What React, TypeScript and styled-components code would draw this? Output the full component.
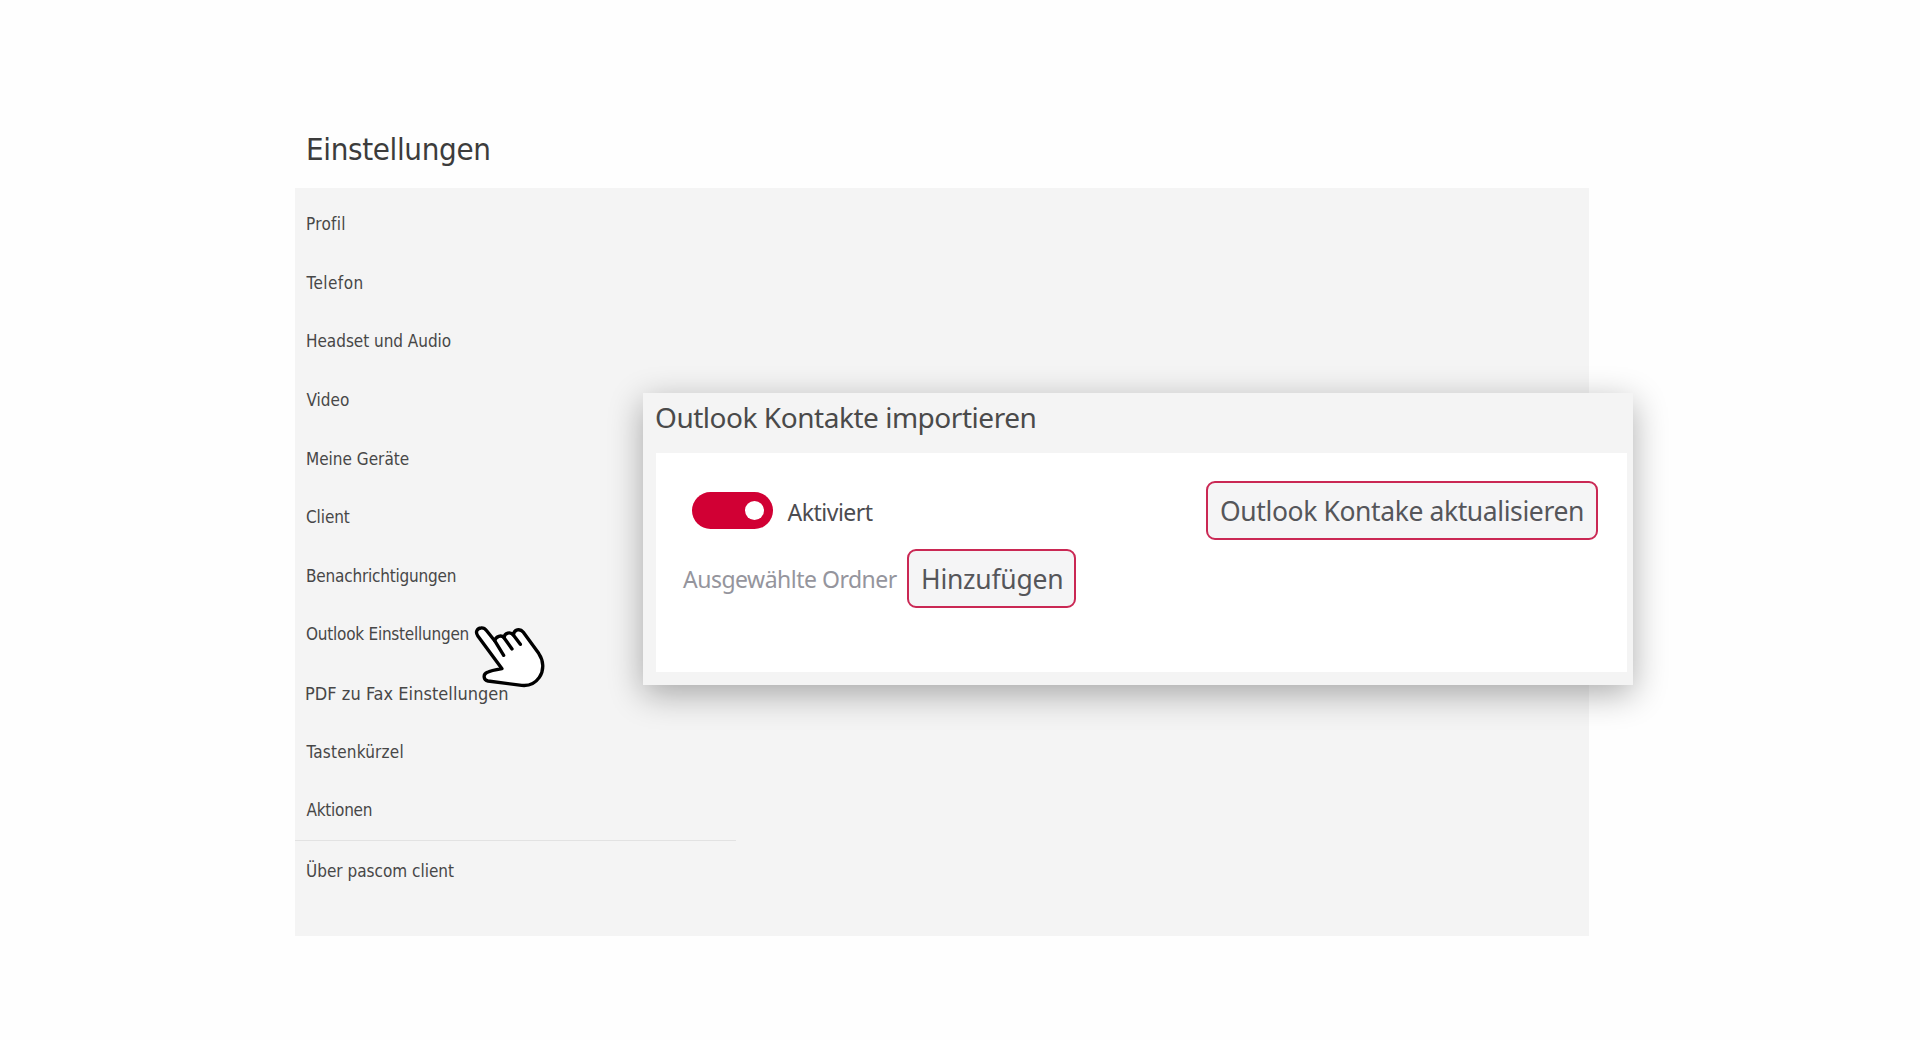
import React from 'react';
import styled, { createGlobalStyle } from 'styled-components';

const GlobalStyle = createGlobalStyle`
  * { box-sizing: border-box; }
  body { margin: 0; background: #fefefe; }
`;

const uiFont = '"DejaVu Sans Condensed", "DejaVu Sans", sans-serif';
const dialogFont = '"Noto Sans", "Open Sans", sans-serif';

const Page = styled.main`
  width: 1920px;
  height: 1040px;
  overflow: hidden;
  padding: 128px 331px 0 295px;
  background: #fefefe;
  color: #474747;
  font-family: ${uiFont};
`;

const PageTitle = styled.h1`
  margin: 0;
  height: 60px;
  padding-left: 11px;
  font-size: 31px;
  font-weight: 400;
  line-height: 42px;
  letter-spacing: -0.35px;
  color: #3c3c3c;
`;

const Panel = styled.section`
  position: relative;
  height: 748.4px;
  padding-top: 7px;
  background: #f4f4f4;
`;

const Menu = styled.nav`
  width: 441px;
  display: flex;
  flex-direction: column;
`;

const MenuItem = styled.a<{ $spacing?: number; $size?: number; $indent?: number }>`
  display: flex;
  align-items: center;
  height: 58.6px;
  padding-left: ${(p) => p.$indent ?? 11}px;
  font-size: ${(p) => p.$size ?? 17}px;
  letter-spacing: ${(p) => p.$spacing ?? 0}px;
  white-space: nowrap;
`;

const Divider = styled.hr`
  width: 100%;
  height: 1px;
  margin: 0 0 1px;
  border: 0;
  background: #e2e2e2;
`;

const HandCursor = styled.svg`
  position: absolute;
  left: 165px;
  top: 421.5px;
  width: 100px;
  height: 90px;
  pointer-events: none;
`;

const Dialog = styled.section`
  position: absolute;
  left: 348px;
  top: 205px;
  width: 990px;
  height: 291.5px;
  display: flex;
  flex-direction: column;
  padding: 0 6px 13px 13px;
  background: #f4f4f4;
  box-shadow: 0 9px 32px rgba(0, 0, 0, 0.32);
  font-family: ${dialogFont};
`;

const DialogTitle = styled.h2`
  margin: 0 0 0 -1px;
  height: 60px;
  font-size: 28px;
  font-weight: 400;
  line-height: 48px;
  letter-spacing: -0.47px;
  color: #4a4a4a;
`;

const DialogBody = styled.div`
  flex: 1;
  display: flex;
  flex-direction: column;
  gap: 9px;
  padding: 28px 29px 0 27px;
  background: #fff;
`;

const Row = styled.div`
  height: 59px;
  display: flex;
  align-items: center;
`;

const Toggle = styled.button`
  width: 81px;
  height: 37px;
  margin: 0 14.5px 0 9px;
  padding: 0 9px;
  display: flex;
  align-items: center;
  justify-content: flex-end;
  border: 0;
  border-radius: 19px;
  background: #d10034;
`;

const Knob = styled.span`
  width: 19px;
  height: 19px;
  border-radius: 50%;
  background: #fff;
`;

const Label = styled.span<{ $muted?: boolean }>`
  width: ${(p) => (p.$muted ? '215px' : 'auto')};
  padding-top: ${(p) => (p.$muted ? 0 : 2)}px;
  font-size: 23px;
  line-height: 30px;
  letter-spacing: -0.5px;
  white-space: nowrap;
  color: ${(p) => (p.$muted ? '#95959d' : '#4c4c50')};
`;

const Button = styled.button<{ $width: number; $spacing?: number; $push?: boolean; $gap?: number }>`
  width: ${(p) => p.$width}px;
  height: 59px;
  margin-left: ${(p) => (p.$push ? 'auto' : `${p.$gap ?? 0}px`)};
  padding: 0 0 0 12px;
  border: 2px solid #ca2854;
  border-radius: 9px;
  background: #f5f5f6;
  color: #55565a;
  font-family: inherit;
  font-size: 26.5px;
  letter-spacing: ${(p) => p.$spacing ?? 0}px;
  text-align: left;
  white-space: nowrap;
`;

const items = [
  { label: 'Profil', spacing: 0.3 },
  { label: 'Telefon', spacing: 0.45, indent: 11.5 },
  { label: 'Headset und Audio', spacing: -0.03 },
  { label: 'Video', indent: 11.5 },
  { label: 'Meine Geräte' },
  { label: 'Client', spacing: -0.1 },
  { label: 'Benachrichtigungen', spacing: -0.2 },
  { label: 'Outlook Einstellungen', spacing: -0.24 },
  { label: 'PDF zu Fax Einstellungen', size: 18, spacing: 0.04, indent: 10 },
  { label: 'Tastenkürzel', spacing: 0.2, indent: 11.5 },
  { label: 'Aktionen', spacing: -0.25, indent: 11.5 },
];

export default function App() {
  return (
    <Page>
      <GlobalStyle />
      <PageTitle>Einstellungen</PageTitle>
      <Panel>
        <Menu>
          {items.map((item) => (
            <MenuItem key={item.label} $spacing={item.spacing} $size={item.size} $indent={item.indent}>
              {item.label}
            </MenuItem>
          ))}
          <Divider />
          <MenuItem>Über pascom client</MenuItem>
        </Menu>
        <HandCursor viewBox="0 0 300 270" aria-hidden="true">
          <path
            d="M126 176 L53 77 C45 65 52 55 63 54 C71 53 76 57 80 62 L104 92 C108 78 124 74 132 83 C134 68 151 64 160 75 C162 58 180 54 190 67 L236 130 C251 152 253 180 238 202 C224 222 205 228 185 226 L84 213 C70 210 68 193 82 187 C91 182 108 179 126 176 Z"
            fill="#fff"
            stroke="#000"
            strokeWidth="10"
            strokeLinejoin="round"
          />
          <path
            d="M104 92 L131 136 M132 83 L156 117 M160 75 L181 103"
            fill="none"
            stroke="#000"
            strokeWidth="10"
            strokeLinecap="round"
          />
        </HandCursor>
        <Dialog>
          <DialogTitle>Outlook Kontakte importieren</DialogTitle>
          <DialogBody>
            <Row>
              <Toggle role="switch" aria-checked="true">
                <Knob />
              </Toggle>
              <Label>Aktiviert</Label>
              <Button $width={392} $spacing={-0.4} $push>
                Outlook Kontake aktualisieren
              </Button>
            </Row>
            <Row>
              <Label $muted>Ausgewählte Ordner</Label>
              <Button $width={169} $gap={9} $spacing={-0.25}>
                Hinzufügen
              </Button>
            </Row>
          </DialogBody>
        </Dialog>
      </Panel>
    </Page>
  );
}
